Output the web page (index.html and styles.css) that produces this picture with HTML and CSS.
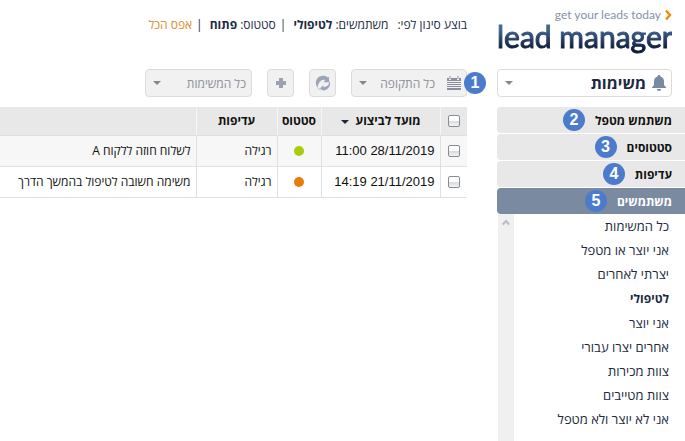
FILE: index.html
```html
<!DOCTYPE html>
<html lang="he" dir="rtl">
<head>
    <meta charset="UTF-8">
    <meta name="viewport" content="width=device-width, initial-scale=1.0">
    <title>Lead Manager - משימות</title>
    <link rel="stylesheet" href="styles.css">
</head>
<body>
    <!-- Sidebar -->
    <aside class="sidebar">
        <div class="logo" dir="ltr">
            <div class="tagline">
                <span>get your leads today</span>
                <svg width="7" height="12" viewBox="0 0 7 12"><path d="M1 1.500 5 6 1 10.500" fill="none" stroke="#f08a10" stroke-width="2.400"/></svg>
            </div>
            <div class="brand">lead manager</div>
        </div>

        <div class="picker module">
            <svg width="14" height="16" viewBox="0 0 14 16"><path fill="#7a8aa1" d="M7 0c.9 0 1.500.6 1.500 1.400C10.900 2 12 4 12 6.200V10l2 2.200V13H0v-.8L2 10V6.200C2 4 3.100 2 5.500 1.400 5.500.6 6.100 0 7 0zM4.800 14h4.400c-.2 1.200-1.100 2-2.200 2s-2-.8-2.200-2z"/></svg>
            <select aria-label="מודול">
                <option>משימות</option>
            </select>
        </div>

        <nav class="filters">
            <button class="heading">משתמש מטפל<span class="badge">2</span></button>
            <button class="heading">סטטוסים<span class="badge">3</span></button>
            <button class="heading">עדיפות<span class="badge">4</span></button>
            <button class="heading active">משתמשים<span class="badge">5</span></button>
        </nav>

        <div class="user-list">
            <ul>
                <li><a href="#">כל המשימות</a></li>
                <li><a href="#">אני יוצר או מטפל</a></li>
                <li><a href="#">יצרתי לאחרים</a></li>
                <li><a href="#" class="selected">לטיפולי</a></li>
                <li><a href="#">אני יוצר</a></li>
                <li><a href="#">אחרים יצרו עבורי</a></li>
                <li><a href="#">צוות מכירות</a></li>
                <li><a href="#">צוות מטייבים</a></li>
                <li><a href="#">אני לא יוצר ולא מטפל</a></li>
            </ul>
            <div class="scroll-track">
                <svg width="8" height="7" viewBox="0 0 8 7"><path d="M.8 5.500 4 2l3.200 3.500" fill="none" stroke="#b9bcc9" stroke-width="2"/></svg>
            </div>
        </div>
    </aside>

    <!-- Tasks -->
    <main class="content">
        <div class="summary">
            <span class="summary-title">בוצע סינון לפי:</span>
            <span>משתמשים: <b>לטיפולי</b></span>
            <span class="sep">|</span>
            <span>סטטוס: <b>פתוח</b></span>
            <span class="sep">|</span>
            <a href="#" class="reset">אפס הכל</a>
        </div>

        <div class="toolbar">
            <div class="picker period">
                <svg width="14" height="14" viewBox="0 0 14 14"><path fill="#8b8f9c" d="M0 2h2v2h2V2h6v2h2V2h2v3H0zM2.500 0h1v3h-1zM10.500 0h1v3h-1zM0 6h14v1H0zM0 8h14v1H0zM0 10h14v1H0zM0 12h14v2H0z"/></svg>
                <select aria-label="תקופה">
                    <option>כל התקופה</option>
                </select>
                <span class="badge">1</span>
            </div>
            <button class="tool" aria-label="רענון">
                <svg width="16" height="16" viewBox="0 0 16 16">
                    <path fill="#9da5b5" d="M2.500 12.500C-.5 8.500.8 3 5.200 1.300 8 .2 11 .8 13 2.500l1-1v5.700H8.500L10.300 5C7 3.800 3.500 6.500 2.500 12.500z"/>
                    <path fill="#9da5b5" d="M14.500 5.500c2 4.500-1 9.300-6 9.800v.6L5 13.300l3.500-3v2c3.800-.4 6-3 6-6.800z"/>
                    <path fill="none" stroke="#b9bfca" d="M2.500 12.500c.9 1.200 2 2 3.400 2.500"/>
                </svg>
            </button>
            <button class="tool" aria-label="הוספה">
                <svg width="10" height="10" viewBox="0 0 10 10"><path fill="#9da2b3" d="M3 0h4v3h3v4H7v3H3V7H0V3h3z"/></svg>
            </button>
            <div class="picker tasks">
                <select aria-label="משימות">
                    <option>כל המשימות</option>
                </select>
            </div>
        </div>

        <table class="task-table">
            <thead>
                <tr>
                    <th class="col-check"><input type="checkbox" aria-label="בחר הכל"></th>
                    <th class="col-date">מועד לביצוע<span class="sort"></span></th>
                    <th class="col-status">סטטוס</th>
                    <th class="col-priority">עדיפות</th>
                    <th></th>
                </tr>
            </thead>
            <tbody>
                <tr>
                    <td class="col-check"><input type="checkbox" aria-label="לשלוח חוזה ללקוח A"></td>
                    <td class="col-date">28/11/2019 11:00</td>
                    <td class="col-status"><span class="dot green"></span></td>
                    <td>רגילה</td>
                    <td>לשלוח חוזה ללקוח A</td>
                </tr>
                <tr>
                    <td class="col-check"><input type="checkbox" aria-label="משימה חשובה לטיפול בהמשך הדרך"></td>
                    <td class="col-date">21/11/2019 14:19</td>
                    <td class="col-status"><span class="dot orange"></span></td>
                    <td>רגילה</td>
                    <td>משימה חשובה לטיפול בהמשך הדרך</td>
                </tr>
            </tbody>
        </table>
    </main>
</body>
</html>
```
FILE: styles.css
```css
* {
    box-sizing: border-box;
}

body {
    margin: 0;
    display: flex;
    gap: 30px;
    min-height: 100vh;
    background: #fff;
    color: #1b2a41;
    font-family: "Open Sans", "Noto Sans", sans-serif;
    font-size: 12px;
    line-height: 16px;
}

a {
    color: inherit;
    text-decoration: none;
}

button,
select {
    font-family: inherit;
    font-size: inherit;
    color: inherit;
    cursor: pointer;
}

svg {
    flex: none;
}

/* Sidebar */
.sidebar {
    flex: none;
    width: 188px;
    display: flex;
    flex-direction: column;
    padding-top: 8px;
}

.logo {
    height: 61px;
    margin-right: 13px;
    white-space: nowrap;
}

.tagline {
    display: flex;
    justify-content: flex-end;
    align-items: center;
    gap: 4px;
    height: 14px;
    color: #8592a8;
    font-family: Lato, sans-serif;
    font-size: 12px;
    line-height: 14px;
}

.brand {
    padding-bottom: 6px;
    font-family: Lato, sans-serif;
    font-size: 30px;
    line-height: 28px;
    color: transparent;
    background: linear-gradient(#41658f 20%, #0d1c3a 80%);
    -webkit-background-clip: text;
    background-clip: text;
    -webkit-text-stroke: 1px transparent;
}

/* Drop-downs */
.picker {
    position: relative;
    display: flex;
    align-items: center;
    height: 28px;
    padding: 0 5px;
    border: 1px solid #dcdcdc;
    border-radius: 4px;
    background: #f1f1f1;
    color: #8b8f98;
}

.picker select {
    flex: 1;
    min-width: 0;
    height: 26px;
    padding: 0 12px 0 16px;
    border: 0;
    appearance: none;
    background: url("data:image/svg+xml,%3Csvg xmlns='http://www.w3.org/2000/svg' width='8' height='4'%3E%3Cpath d='M0 0h8L4 4z' fill='%23838791'/%3E%3C/svg%3E") no-repeat 2px 11px;
}

.module {
    margin-right: 13px;
    background: #fff;
    color: #1b2a41;
}

.picker.module select {
    padding-right: 6px;
    color: #1b2a41;
    font-size: 16px;
    font-weight: bold;
}

.badge {
    display: flex;
    align-items: center;
    justify-content: center;
    width: 22px;
    height: 22px;
    border-radius: 50%;
    background: #4d7bcb;
    color: #fff;
    font-family: "Liberation Sans", sans-serif;
    font-size: 16px;
    font-weight: bold;
}

.filters {
    display: flex;
    flex-direction: column;
    gap: 1px;
    margin-top: 10px;
}

.heading {
    display: flex;
    align-items: center;
    gap: 10px;
    height: 26px;
    padding: 0 13px 0 0;
    border: 0;
    border-radius: 4px 0 0 4px;
    background: #e8e8e8;
    color: #111;
    font-weight: bold;
}

.heading.active {
    background: #7a8aa1;
    color: #fff;
}

.user-list {
    flex: 1;
    display: flex;
    justify-content: space-between;
}

.user-list ul {
    margin: 0;
    padding: 0 16px 0 0;
    list-style: none;
    font-size: 13px;
    line-height: 24px;
}

.selected {
    font-size: 12px;
    font-weight: bold;
}

.scroll-track {
    width: 16px;
    margin-left: 1px;
    background: #f0f0f0;
    text-align: center;
}

/* Content */
.content {
    flex: 1;
    min-width: 0;
    padding-top: 17px;
}

.summary {
    display: flex;
    gap: 4px;
    margin-bottom: 36px;
}

.summary-title {
    margin-left: 5px;
}

.sep {
    margin-right: 3px;
}

.reset {
    color: #e08a2b;
}

.toolbar {
    display: flex;
    gap: 15px;
    margin-bottom: 10px;
}

.period {
    width: 116px;
}

.period .badge {
    position: absolute;
    top: 2px;
    right: -20px;
}

.tasks {
    width: 107px;
}

.picker.tasks select {
    padding-right: 0;
}

.tool {
    display: flex;
    align-items: center;
    justify-content: center;
    width: 27px;
    height: 28px;
    padding: 0;
    border: 1px solid #dcdcdc;
    border-radius: 4px;
    background: #f1f1f1;
}

/* Task table */
.task-table {
    width: 100%;
    border-collapse: collapse;
    table-layout: fixed;
    color: #111;
}

.task-table th,
.task-table td {
    height: 31px;
    padding: 0 5px;
    border-bottom: 1px solid #e0e0e0;
    border-left: 1px solid #e0e0e0;
    text-align: right;
    white-space: nowrap;
}

.task-table th {
    height: 28px;
    background: #e8e8e8;
    border-left-color: #f6f6f6;
    text-align: center;
}

.task-table th:last-child,
.task-table td:last-child {
    border-left: 0;
}

.task-table tbody tr:first-child {
    background: #f7f7f7;
}

.task-table .col-check {
    width: 27px;
    text-align: center;
}

.col-date {
    width: 119px;
}

td.col-date {
    font-family: "Liberation Sans", sans-serif;
    font-size: 13px;
}

.task-table .col-status {
    width: 44px;
    padding: 0;
    text-align: center;
}

.col-priority {
    width: 81px;
}

.task-table input {
    display: block;
    width: 12px;
    height: 12px;
    margin: 0 auto;
    appearance: none;
    border: 1px solid #858b98;
    border-radius: 2px;
    background: linear-gradient(#fff 45%, #d8d8d8 50%, #f4f4f4);
}

.sort {
    display: inline-block;
    margin-right: 7px;
    border: 4px solid transparent;
    border-top-color: #1b2a41;
    border-bottom: 0;
    vertical-align: middle;
}

.dot {
    display: inline-block;
    width: 10px;
    height: 10px;
    border-radius: 50%;
    vertical-align: middle;
}

.green {
    background: #a8cc0c;
}

.orange {
    background: #e67e09;
}
```
